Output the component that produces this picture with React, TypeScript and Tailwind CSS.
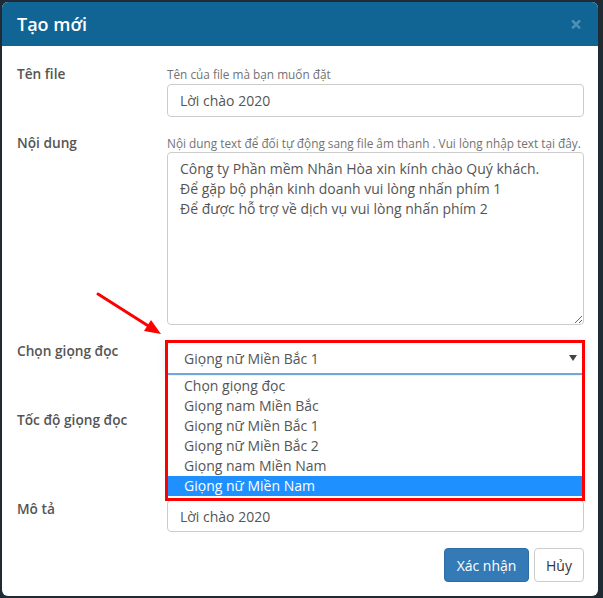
import React from "react";

const font = { fontFamily: '"Open Sans", "Noto Sans", sans-serif' };

const voices = [
  "Chọn giọng đọc",
  "Giọng nam Miền Bắc",
  "Giọng nữ Miền Bắc 1",
  "Giọng nữ Miền Bắc 2",
  "Giọng nam Miền Nam",
  "Giọng nữ Miền Nam",
];

function Label({ children, className = "" }: { children: React.ReactNode; className?: string }) {
  return (
    <div className={`w-[150px] shrink-0 text-[13.7px] font-semibold leading-[20px] text-[#555] ${className}`}>
      {children}
    </div>
  );
}

function Help({ children }: { children: React.ReactNode }) {
  return (
    <p className="mt-[2px] whitespace-nowrap text-[11.8px] leading-[16px] text-[#737373]">{children}</p>
  );
}

export default function App() {
  return (
    <div className="relative h-[598px] w-[603px] overflow-hidden bg-[#1e2a34]" style={font}>
      <div className="ml-[2px] mt-[2px] flex h-[594px] w-[596px] flex-col overflow-hidden rounded-[6px] bg-white">
        <div className="flex h-[44px] shrink-0 items-center justify-between bg-[#106595] pl-[15px] pr-[16px]">
          <h4 className="text-[18px] font-semibold text-white">Tạo mới</h4>
          <span className="text-[21px] font-bold leading-none text-white/30">×</span>
        </div>

        <div className="flex flex-col pl-[15px] pr-[14px] pt-[18px]">
          {/* Tên file */}
          <div className="flex">
            <Label>Tên file</Label>
            <div className="min-w-0 flex-1">
              <Help>Tên của file mà bạn muốn đặt</Help>
              <input
                readOnly
                value="Lời chào 2020"
                className="mt-[2px] h-[33px] w-full rounded-[4px] border border-[#ccc] px-3 text-[14px] text-[#555] outline-none"
              />
            </div>
          </div>

          {/* Nội dung */}
          <div className="mt-[16px] flex">
            <Label>Nội dung</Label>
            <div className="min-w-0 flex-1">
              <Help>Nội dung text để đối tự động sang file âm thanh . Vui lòng nhập text tại đây.</Help>
              <textarea
                readOnly
                value={
                  "Công ty Phần mềm Nhân Hòa xin kính chào Quý khách.\nĐể gặp bộ phận kinh doanh vui lòng nhấn phím 1\nĐể được hỗ trợ về dịch vụ vui lòng nhấn phím 2"
                }
                className="mt-[1px] block h-[173px] w-full rounded-[4px] border border-[#ccc] px-3 py-[6px] text-[14px] leading-[20px] text-[#555] outline-none"
              />
            </div>
          </div>

          {/* Chọn giọng đọc */}
          <div className="relative z-10 mt-[16px] flex">
            <Label>Chọn giọng đọc</Label>
            <div className="relative flex-1">
              <div className="mt-[2px] flex h-[32px] items-center justify-between rounded-t-[4px] border-b-2 border-[#6fa7dc] bg-white pl-[17px] pr-[7px] text-[14px] text-[#555] shadow-[0_0_8px_rgba(102,175,233,0.35)]">
                <span>Giọng nữ Miền Bắc 1</span>
                <svg width="8" height="6" viewBox="0 0 8 6">
                  <path d="M0 0 H8 L4 6 Z" fill="#444" />
                </svg>
              </div>
              <ul className="absolute left-0 right-[1px] top-[35px] border-x border-[#aaa] bg-white text-[14px] leading-[20px] text-[#555]">
                {voices.map((v, i) => (
                  <li
                    key={v}
                    className={
                      i === voices.length - 1 ? "bg-[#1e90ff] pl-[16px] text-white" : "pl-[16px]"
                    }
                  >
                    {v}
                  </li>
                ))}
              </ul>
              <div className="pointer-events-none absolute left-[-2px] top-[-1px] h-[161px] w-[420px] border-[3px] border-[#ff0000]" />
            </div>
          </div>

          {/* Tốc độ giọng đọc */}
          <div className="mt-[35px] flex">
            <Label>Tốc độ giọng đọc</Label>
            <div className="h-[74px] flex-1" />
          </div>

          {/* Mô tả */}
          <div className="mt-[16px] flex">
            <Label className="-mt-[1px]">Mô tả</Label>
            <div className="flex-1">
              <input
                readOnly
                value="Lời chào 2020"
                className="h-[32px] w-full rounded-[4px] border border-[#ccc] px-3 text-[14px] text-[#555] outline-none"
              />
            </div>
          </div>

          <div className="mt-[16px] flex justify-end gap-[5px]">
            <button className="h-[34px] w-[85px] rounded-[4px] border border-[#2e6da4] bg-[#337ab7] text-[14px] text-white">
              Xác nhận
            </button>
            <button className="h-[34px] w-[50px] rounded-[4px] border border-[#ccc] bg-white text-[14px] text-[#333]">
              Hủy
            </button>
          </div>
        </div>
      </div>

      {/* red pointer arrow */}
      <svg className="pointer-events-none absolute left-0 top-0" width="603" height="598">
        <line x1="98" y1="294" x2="150" y2="327" stroke="#ff0000" strokeWidth="3" strokeLinecap="round" />
        <path d="M161 334 L144 331 L151 320 Z" fill="#ff0000" />
      </svg>
    </div>
  );
}
